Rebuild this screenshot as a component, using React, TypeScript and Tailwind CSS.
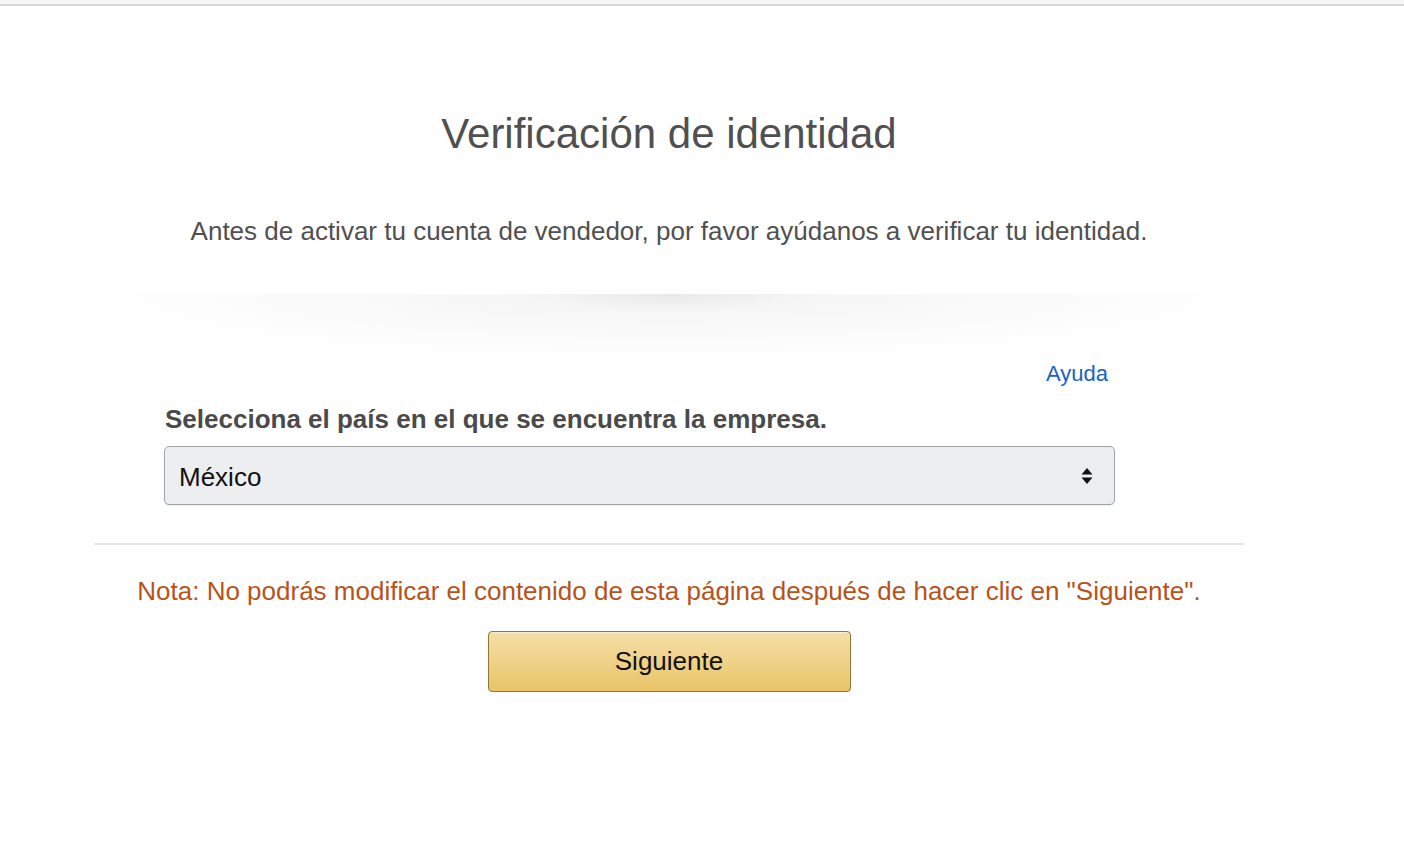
const font = { fontFamily: '"Liberation Sans", Arial, sans-serif' }

const SortArrows = () => (
  <svg width="12" height="18" viewBox="0 0 12 18" aria-hidden="true">
    <path d="M6 1 L11.5 7.5 H0.5 Z" fill="#111" />
    <path d="M6 17 L11.5 10.5 H0.5 Z" fill="#111" />
  </svg>
)

export default function App() {
  return (
    <div className="min-h-screen bg-white" style={font}>
      <div className="h-[4px] bg-[#f6f6f6]" />
      <div className="h-[2px] bg-[#d8d8d8]" />

      <div className="ml-[94px] w-[1150px] flex flex-col">
        <h1 className="mt-[104px] text-center text-[42px] leading-[48px] font-normal text-[#505050]">
          Verificación de identidad
        </h1>
        <p className="mt-[58px] text-center text-[26px] leading-[30px] text-[#505050]">
          Antes de activar tu cuenta de vendedor, por favor ayúdanos a verificar tu identidad.
        </p>

        <div className="mt-[48px] h-[68px] bg-[radial-gradient(ellipse_52%_100%_at_50%_0%,#e9e9e9_0%,#f6f6f6_25%,#ffffff_100%)]" />

        <div className="px-[70px] flex flex-col">
          <div className="flex justify-end pr-[66px]">
            <a href="#" className="text-[22px] leading-[24px] text-[#1a62c4]">Ayuda</a>
          </div>
          <label className="mt-[18px] pl-[1px] text-[26px] leading-[30px] font-bold text-[#4a4a4a]">
            Selecciona el país en el que se encuentra la empresa.
          </label>
          <div className="mt-[12px] w-[951px] h-[59px] flex items-center justify-between pl-[14px] pr-[21px] rounded-[5px] border border-[#a2a3a7] bg-[#edeef0] shadow-[0_1px_1px_rgba(0,0,0,0.08)]">
            <span className="pt-[3px] text-[26px] text-[#111]">México</span>
            <SortArrows />
          </div>
        </div>

        <div className="mt-[38px] h-[2px] bg-[#e7e7e7]" />

        <p className="mt-[31px] text-center text-[26px] leading-[30px] text-[#b7531a]">
          Nota: No podrás modificar el contenido de esta página después de hacer clic en "Siguiente".
        </p>

        <div className="mt-[25px] flex justify-center">
          <button className="w-[363px] h-[61px] rounded-[4px] border border-[#927534] bg-gradient-to-b from-[#f5dfa7] to-[#e9c466] text-[26px] text-[#111] shadow-[inset_0_1px_0_rgba(255,255,255,0.5)]">
            Siguiente
          </button>
        </div>
      </div>
    </div>
  )
}
